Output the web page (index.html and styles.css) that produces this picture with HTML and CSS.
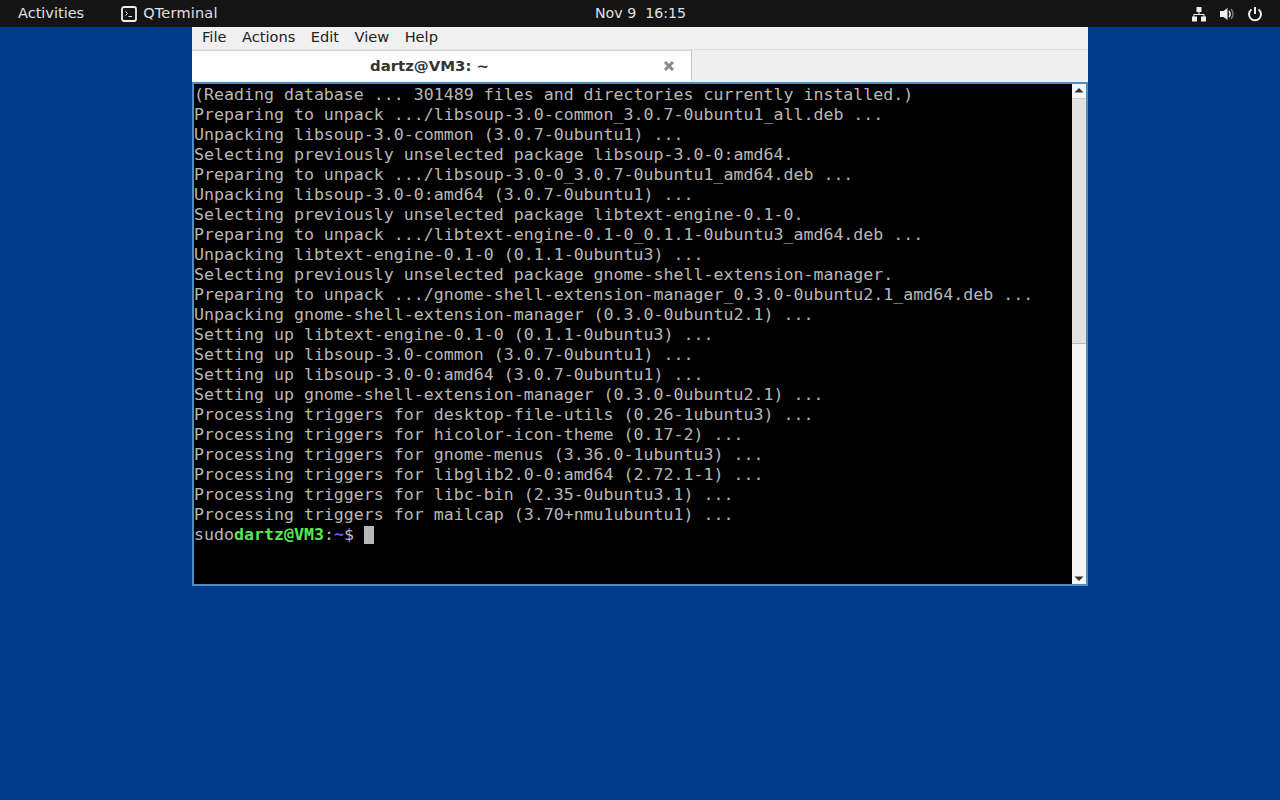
FILE: index.html
```html
<!DOCTYPE html>
<html lang="en">
<head>
<meta charset="utf-8">
<title>QTerminal</title>
<link rel="stylesheet" href="styles.css">
</head>
<body>
<header class="panel">
  <div class="panel-left">
    <span class="activities">Activities</span>
    <span class="app">
      <svg class="app-icon" width="16" height="16" viewBox="0 0 16 16"><rect x="1" y="1" width="14" height="14" rx="2" fill="none" stroke="#eee" stroke-width="1.8"/><path d="M4.500 5.500l2 2-2 2" fill="none" stroke="#eee" stroke-width="1"/><path d="M7.500 10.500H11" stroke="#eee" stroke-width="1"/></svg>
      <span class="app-name">QTerminal</span>
    </span>
  </div>
  <div class="clock">Nov 9&nbsp; 16:15</div>
  <div class="tray">
    <svg width="16" height="16" viewBox="0 0 16 16" fill="#eee"><rect x="5.500" y="1" width="5" height="5"/><rect x="1" y="10.500" width="5" height="5"/><rect x="10" y="10.500" width="5" height="5"/><path d="M7.500 6h1v2h5v3h-1V9H3.500v2h-1V8h5z"/></svg>
    <svg width="16" height="16" viewBox="0 0 16 16" fill="#eee"><path d="M1 5h3.500L8.500 2v12l-4-3H1z"/><path d="M10 5c1.300 1.700 1.300 4.300 0 6" fill="none" stroke="#eee" stroke-width="1.500"/><path d="M12 3c2.400 3 2.400 7 0 10" fill="none" stroke="#777" stroke-width="1.500"/></svg>
    <svg width="16" height="16" viewBox="0 0 16 16" fill="none" stroke="#eee" stroke-width="2"><path d="M4.500 3.500a6 6 0 1 0 7 0"/><path d="M8 1v7"/></svg>
  </div>
</header>
<main class="window">
  <nav class="menubar">
    <span>File</span><span>Actions</span><span>Edit</span><span>View</span><span>Help</span>
  </nav>
  <div class="tabbar">
    <div class="tab">
      <span class="tab-title">dartz@VM3: ~</span>
      <svg class="tab-close" width="12" height="12" viewBox="0 0 12 12"><path d="M2 2l8 8M10 2l-8 8" stroke="#8a8a8a" stroke-width="3"/></svg>
    </div>
  </div>
  <div class="term-frame">
    <pre class="term">(Reading database ... 301489 files and directories currently installed.)
Preparing to unpack .../libsoup-3.0-common_3.0.7-0ubuntu1_all.deb ...
Unpacking libsoup-3.0-common (3.0.7-0ubuntu1) ...
Selecting previously unselected package libsoup-3.0-0:amd64.
Preparing to unpack .../libsoup-3.0-0_3.0.7-0ubuntu1_amd64.deb ...
Unpacking libsoup-3.0-0:amd64 (3.0.7-0ubuntu1) ...
Selecting previously unselected package libtext-engine-0.1-0.
Preparing to unpack .../libtext-engine-0.1-0_0.1.1-0ubuntu3_amd64.deb ...
Unpacking libtext-engine-0.1-0 (0.1.1-0ubuntu3) ...
Selecting previously unselected package gnome-shell-extension-manager.
Preparing to unpack .../gnome-shell-extension-manager_0.3.0-0ubuntu2.1_amd64.deb ...
Unpacking gnome-shell-extension-manager (0.3.0-0ubuntu2.1) ...
Setting up libtext-engine-0.1-0 (0.1.1-0ubuntu3) ...
Setting up libsoup-3.0-common (3.0.7-0ubuntu1) ...
Setting up libsoup-3.0-0:amd64 (3.0.7-0ubuntu1) ...
Setting up gnome-shell-extension-manager (0.3.0-0ubuntu2.1) ...
Processing triggers for desktop-file-utils (0.26-1ubuntu3) ...
Processing triggers for hicolor-icon-theme (0.17-2) ...
Processing triggers for gnome-menus (3.36.0-1ubuntu3) ...
Processing triggers for libglib2.0-0:amd64 (2.72.1-1) ...
Processing triggers for libc-bin (2.35-0ubuntu3.1) ...
Processing triggers for mailcap (3.70+nmu1ubuntu1) ...
sudo<b class="user">dartz@VM3</b>:<b class="path">~</b>$ <span class="cursor"> </span></pre>
    <div class="scrollbar">
      <div class="arrow arrow-up"><svg width="12" height="6" viewBox="0 0 12 6"><path d="M1.500 5.500L6 1l4.500 4.500z" fill="#333"/></svg></div>
      <div class="thumb"></div>
      <div class="track"></div>
      <div class="arrow arrow-down"><svg width="12" height="6" viewBox="0 0 12 6"><path d="M1.500.5L6 5 10.500.5z" fill="#333"/></svg></div>
    </div>
  </div>
</main>
</body>
</html>
```
FILE: styles.css
```css
* { box-sizing: border-box; }
html, body { margin: 0; height: 100%; overflow: hidden; }
body { background: #003a8c; display: flex; flex-direction: column; align-items: center; }
.panel {
  width: 100%; height: 27px; flex: none; background: #141414; color: #e0e0e0;
  display: flex; align-items: center; justify-content: space-between; position: relative;
  font: 14.5px/27px "DejaVu Sans", sans-serif; padding: 0 17px 0 18px;
}
.panel-left { display: flex; align-items: center; gap: 37px; }
.app { display: flex; align-items: center; gap: 6px; }
.app-name { letter-spacing: .2px; }
.clock { position: absolute; left: 595px; top: 0; font-size: 14.2px; }
.tray { display: flex; align-items: center; gap: 12px; }
.tray svg { display: block; }
.window {
  width: 896px; height: 559px; flex: none; background: #efefef;
  display: flex; flex-direction: column;
  font-family: "DejaVu Sans", sans-serif; color: #222;
}
.menubar {
  height: 23px; flex: none; display: flex; gap: 15.500px; padding: 0 10px;
  font-size: 14.600px; line-height: 20px; background: #f0f0f0; border-bottom: 1px solid #ddd;
}
.tabbar { height: 32px; flex: none; background: #efefef; }
.tab {
  width: 500px; height: 31px; background: #fff; display: flex; align-items: center;
  border-top: 1px solid #d4d4d4; border-right: 1px solid #c4c4c4; position: relative;
  border-bottom: 1px solid #fff;
}
.tab-title { flex: 1; text-align: center; font-size: 14.900px; font-weight: bold; color: #333; padding-left: 4px; }
.tab-close { margin-right: 16px; }
.term-frame {
  flex: 1; min-height: 0; display: flex; border: 2px solid #4a8ec4;
  background: #000;
}
.term {
  flex: 1; margin: 0; padding: 1px 0 0; overflow: hidden; background: #000; color: #b8b8b8;
  font: 16.6px/20px "DejaVu Sans Mono", monospace;
}
.user { color: #54e854; font-weight: bold; }
.path { color: #5c5cff; font-weight: bold; }
.cursor { display: inline-block; width: 10px; height: 18px; background: #b8b8b8; vertical-align: -1px; }
.scrollbar { width: 14px; flex: none; background: #f5f5f5; display: flex; flex-direction: column; }
.arrow { height: 14px; flex: none; display: flex; justify-content: center; }
.arrow-up { align-items: flex-start; padding-top: 3px; }
.arrow-down { align-items: flex-end; padding-bottom: 2px; }
.thumb { height: 246px; flex: none; background: #e2e2e2; border-bottom: 1px solid #bbb; border-top: 1px solid #ccc; }
.track { flex: 1; }
```
